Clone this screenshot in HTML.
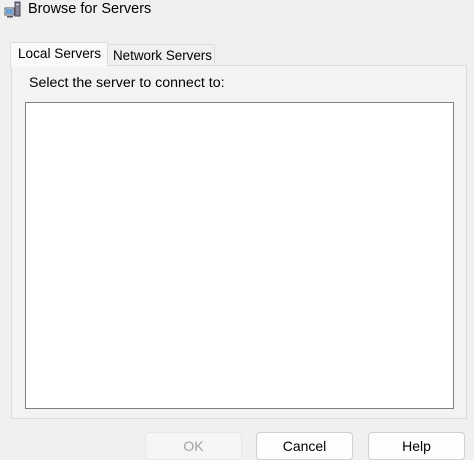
<!DOCTYPE html>
<html><head><style>
body{margin:0;width:474px;height:459px;background:#f0f0f0;font-family:"Liberation Sans",Arial,sans-serif;position:relative;overflow:hidden;font-size:13px;color:#000}
div{position:absolute;box-sizing:border-box;white-space:nowrap}
.title{left:28px;top:0;font-size:14.5px;line-height:18px}
.panel{left:11px;top:65px;width:456px;height:354px;border:1px solid #dcdcdc;background:#f3f3f3}
.tab1{left:10px;top:42px;width:98px;height:25px;border:1px solid #dcdcdc;border-bottom:none;background:#f9f9f9;padding:3px 0 0 7px;font-size:13.6px}
.tab2{left:108px;top:44px;width:107px;height:21px;border:1px solid #dcdcdc;border-bottom:none;border-left:none;background:#f0f0f0;padding:3px 0 0 5px;font-size:13.4px}
.lbl{left:29px;top:75px;font-size:14.2px}
.list{left:25px;top:102px;width:429px;height:307px;background:#fff;border:1px solid #7a7f8a}
.btn{top:432px;width:97px;height:28px;border:1px solid #d0d0d0;border-radius:4px;background:#fdfdfd;text-align:center;line-height:26px;font-size:14px}
</style></head><body>
<svg style="position:absolute;left:4px;top:1px" width="18" height="18" viewBox="0 0 18 18"><rect x="1" y="7" width="9" height="7" fill="#fff" stroke="#556" /><rect x="2" y="8" width="7" height="5" fill="#6aa0d8"/><rect x="3" y="15" width="6" height="1.5" fill="#556"/><rect x="11" y="1" width="5" height="14" fill="#889" stroke="#445"/><rect x="12" y="3" width="3" height="1" fill="#dde"/></svg>
<div class="title">Browse for Servers</div>
<div class="panel"></div>
<div class="tab2">Network Servers</div>
<div class="tab1">Local Servers</div>
<div class="lbl">Select the server to connect to:</div>
<div class="list"></div>
<div class="btn" style="left:145px;color:#a0a0a0;border-color:#e6e6e6;background:#f5f5f5">OK</div>
<div class="btn" style="left:256px">Cancel</div>
<div class="btn" style="left:368px">Help</div>
</body></html>
